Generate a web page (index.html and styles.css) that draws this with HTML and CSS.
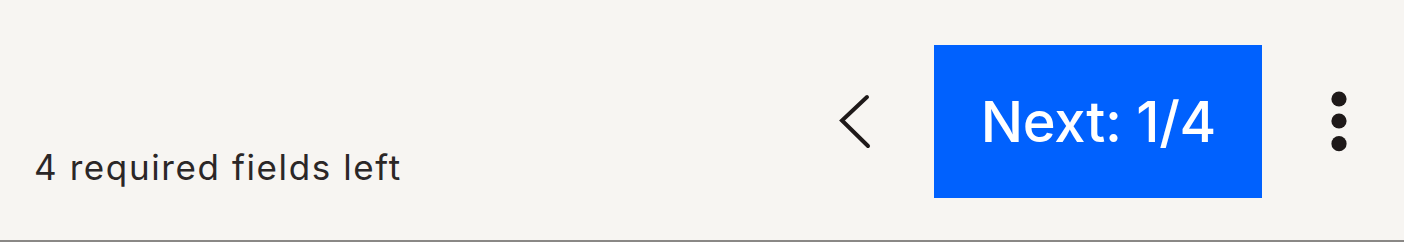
FILE: index.html
```html
<html lang="en">
<head>
  <title>Required fields</title>
  <link rel="stylesheet" href="styles.css">
</head>
<body>
<div class="footer">
  <div class="status">4 required fields left</div>
  <div class="actions">
    <button class="back" title="Back">
      <svg width="36" height="56" viewBox="0 0 36 56">
        <polyline points="30,3 5,26.5 31,52" fill="none" stroke="#1e1919" stroke-width="4" stroke-linecap="round" stroke-linejoin="miter"/>
      </svg>
    </button>
    <button class="next">Next: 1/4</button>
    <button class="more" title="More">
      <svg width="16" height="62" viewBox="0 0 16 62">
        <circle cx="8" cy="8" r="7.6" fill="#1e1919"/>
        <circle cx="8" cy="30" r="7.6" fill="#1e1919"/>
        <circle cx="8" cy="52.7" r="7.6" fill="#1e1919"/>
      </svg>
    </button>
  </div>
</div>
</body>
</html>
```

FILE: styles.css
```css
body { margin: 0; background: #f7f5f2; font-family: Inter, "Liberation Sans", sans-serif; }

.footer {
  height: 242px;
  box-sizing: border-box;
  border-bottom: 2px solid #8a8886;
  padding: 45px 57px 42px 34px;
  display: flex;
  justify-content: space-between;
}

.status {
  align-self: flex-end;
  font-size: 35px;
  line-height: 42px;
  letter-spacing: 1.6px;
  color: #2b2727;
  margin-bottom: 10px;
}

.actions {
  display: flex;
  align-items: center;
}

button {
  border: 0;
  background: none;
  padding: 0;
  cursor: pointer;
  font-family: inherit;
}

.back { display: flex; margin-right: 61px; }
.more { display: flex; margin-left: 69px; }

.next {
  height: 153px;
  padding: 0 46px 0 47px;
  background: #0061fe;
  color: #fff;
  font-size: 56px;
  font-weight: 500;
  letter-spacing: -0.3px;
}
```
